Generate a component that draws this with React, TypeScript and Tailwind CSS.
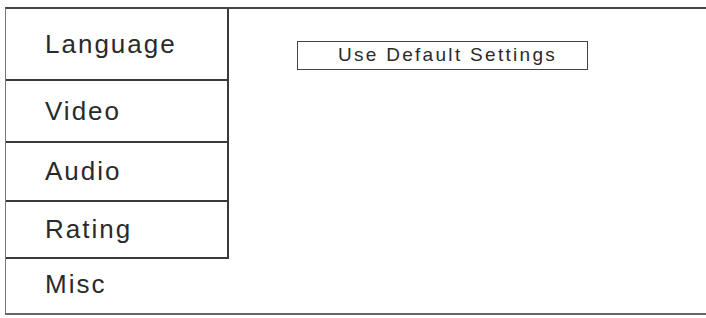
import React from 'react';

const items = [
  { label: 'Language', h: 'h-[72px]' },
  { label: 'Video', h: 'h-[62px]' },
  { label: 'Audio', h: 'h-[59px]' },
  { label: 'Rating', h: 'h-[57px]' },
];

function App() {
  return (
    <div className="w-[706px] h-[318px] overflow-hidden bg-white pt-[7px] pl-[5px] font-['Liberation_Sans',Arial,sans-serif] text-[#2a2a2a]">
      <div className="w-[720px] flex border-t-2 border-b-2 border-l border-[#444] border-l-[#777] border-b-[#666] h-[308px]">
        {/* left menu column */}
        <div className="w-[223px] flex flex-col">
          {items.map((it) => (
            <div
              key={it.label}
              className={`${it.h} flex items-center pl-[39px] border-r-2 border-b-2 border-[#3a3a3a] text-[26px] tracking-[2px]`}
            >
              {it.label}
            </div>
          ))}
          <div className="flex-1 flex items-center pl-[39px] pb-[4px] text-[26px] tracking-[2px]">
            Misc
          </div>
        </div>

        {/* right panel */}
        <div className="flex-1 pt-[32px] pl-[68px]">
          <div className="w-[291px] h-[29px] border-[1.5px] border-[#444] flex items-center justify-center text-[19px] tracking-[2.3px] pl-[10px]">
            Use Default Settings
          </div>
        </div>
      </div>
    </div>
  );
}

export default App;
